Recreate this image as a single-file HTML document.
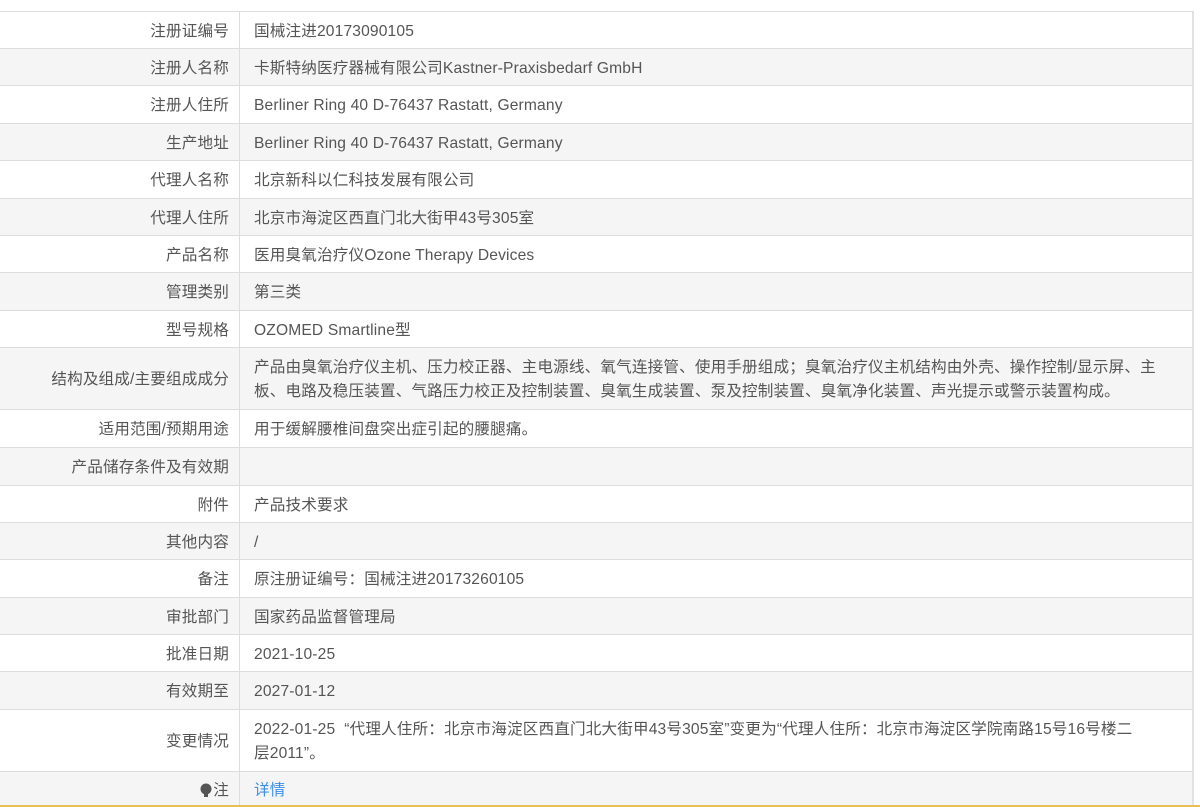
<!DOCTYPE html>
<html><head><meta charset="utf-8"><style>
html,body{margin:0;padding:0;background:#fff;width:1200px;height:807px;overflow:hidden}
.wrap{position:absolute;left:0;top:11px;width:1192px;border-top:1px solid #ddd;border-right:2px solid #e2e2e6;font-family:"Liberation Sans","Noto Sans CJK SC",sans-serif;font-size:15.6px;letter-spacing:0.15px;color:#555;line-height:24px}
.r{display:flex;border-bottom:1px solid #ddd;box-sizing:border-box}
.r:nth-child(even){background:#f5f5f5}
.l{width:240px;flex:none;box-sizing:border-box;text-align:right;padding-right:10px;padding-top:3px;border-right:1px solid #ddd;display:flex;align-items:center;justify-content:flex-end}
.v{padding-left:14px;padding-top:3px;display:flex;align-items:center}
.bottom{position:absolute;left:0;top:805px;width:1200px;height:2px;background:#e6be5a}
a{color:#3c8ff0;text-decoration:none}
</style></head><body>
<div class="wrap">
<div class="r" style="height:37px"><div class="l">注册证编号</div><div class="v">国械注进20173090105</div></div>
<div class="r" style="height:37px"><div class="l">注册人名称</div><div class="v">卡斯特纳医疗器械有限公司Kastner-Praxisbedarf GmbH</div></div>
<div class="r" style="height:38px"><div class="l">注册人住所</div><div class="v">Berliner Ring 40 D-76437 Rastatt, Germany</div></div>
<div class="r" style="height:37px"><div class="l">生产地址</div><div class="v">Berliner Ring 40 D-76437 Rastatt, Germany</div></div>
<div class="r" style="height:38px"><div class="l">代理人名称</div><div class="v">北京新科以仁科技发展有限公司</div></div>
<div class="r" style="height:37px"><div class="l">代理人住所</div><div class="v">北京市海淀区西直门北大街甲43号305室</div></div>
<div class="r" style="height:37px"><div class="l">产品名称</div><div class="v">医用臭氧治疗仪Ozone Therapy Devices</div></div>
<div class="r" style="height:38px"><div class="l">管理类别</div><div class="v">第三类</div></div>
<div class="r" style="height:37px"><div class="l">型号规格</div><div class="v">OZOMED Smartline型</div></div>
<div class="r" style="height:62px"><div class="l">结构及组成/主要组成成分</div><div class="v">产品由臭氧治疗仪主机、压力校正器、主电源线、氧气连接管、使用手册组成；臭氧治疗仪主机结构由外壳、操作控制/显示屏、主<br>板、电路及稳压装置、气路压力校正及控制装置、臭氧生成装置、泵及控制装置、臭氧净化装置、声光提示或警示装置构成。</div></div>
<div class="r" style="height:38px"><div class="l">适用范围/预期用途</div><div class="v">用于缓解腰椎间盘突出症引起的腰腿痛。</div></div>
<div class="r" style="height:38px"><div class="l">产品储存条件及有效期</div><div class="v"></div></div>
<div class="r" style="height:37px"><div class="l">附件</div><div class="v">产品技术要求</div></div>
<div class="r" style="height:37px"><div class="l">其他内容</div><div class="v">/</div></div>
<div class="r" style="height:38px"><div class="l">备注</div><div class="v">原注册证编号：国械注进20173260105</div></div>
<div class="r" style="height:37px"><div class="l">审批部门</div><div class="v">国家药品监督管理局</div></div>
<div class="r" style="height:37px"><div class="l">批准日期</div><div class="v">2021-10-25</div></div>
<div class="r" style="height:38px"><div class="l">有效期至</div><div class="v">2027-01-12</div></div>
<div class="r" style="height:62px"><div class="l">变更情况</div><div class="v">2022-01-25 &nbsp;“代理人住所：北京市海淀区西直门北大街甲43号305室”变更为“代理人住所：北京市海淀区学院南路15号16号楼二<br>层2011”。</div></div>
<div class="r" style="height:34px;border-bottom:none"><div class="l"><svg width="12" height="15" viewBox="0 0 12 15" style="margin-right:1px"><circle cx="6" cy="6" r="5.5" fill="#555"/><rect x="4" y="11" width="4" height="3" fill="#555"/></svg>注</div><div class="v"><a>详情</a></div></div>
</div>
<div class="bottom"></div>
</body></html>
